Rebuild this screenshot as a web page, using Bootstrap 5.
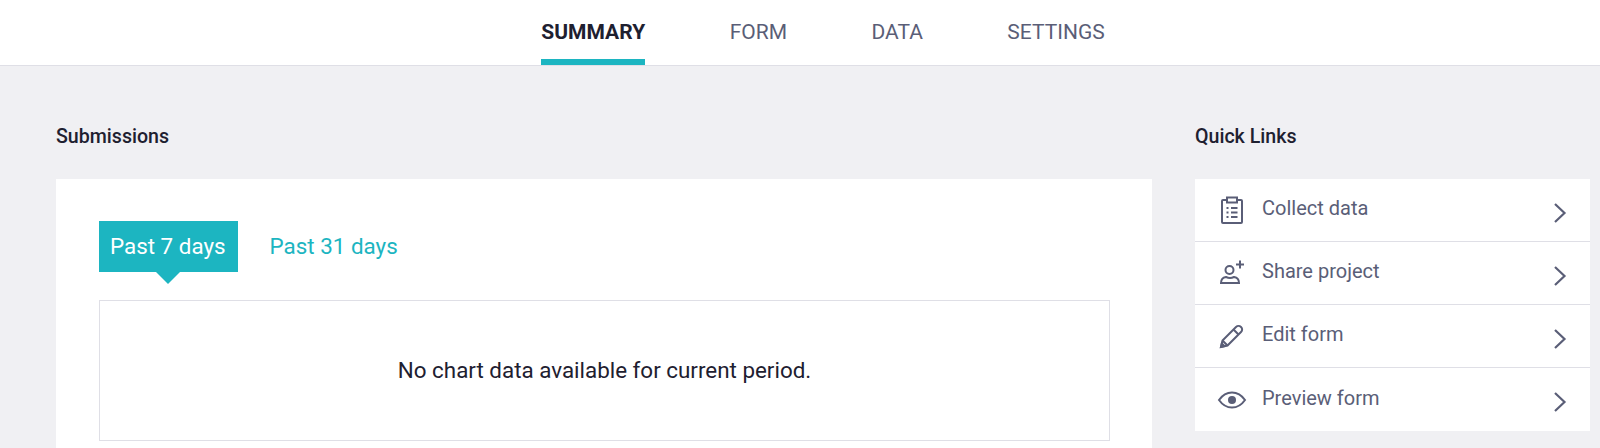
<!DOCTYPE html>
<html>

<head>
  <meta charset="utf-8">
  <meta name="viewport" content="width=device-width">
  <title>Summary</title>
  <link href="https://cdn.jsdelivr.net/npm/bootstrap@5.3.3/dist/css/bootstrap.min.css" rel="stylesheet" type="text/css" />
  <style>
    body { background: #f0f0f3; font-family: Roboto, "Liberation Sans", sans-serif; color: #1e2030; height: 448px; overflow: hidden; }
    .top-tabs { height: 66px; padding-left: 46px; gap: 84.5px; border-bottom: 1px solid #dfdfe6; }
    .top-tab { height: 65px; line-height: 64px; font-size: 21px; color: #5a5e77; text-decoration: none; }
    .top-tab.on { color: #1e2030; font-weight: 700; border-bottom: 6px solid #1cb5c1; }
    .page-body { padding: 61px 10px 0 56px; gap: 43px; }
    .left-side { width: 1096px; }
    .right-side { width: 395px; }
    .side-title { font-size: 19.6px; font-weight: 500; line-height: 20px; margin: 0 0 32px; color: #1e2030; }
    .chart-card { background: #fff; padding: 42px 42px 0 43px; height: 269px; }
    .range-tab { height: 51px; line-height: 50px; font-size: 22.4px; color: #1cb5c1; text-decoration: none; }
    .range-tab.on { background: #1cb5c1; color: #fff; padding: 0 12px 0 11px; position: relative; margin-right: 32px; }
    .range-tab.on::after { content: ""; position: absolute; left: calc(50% - 12px); top: 51px; border: 12px solid transparent; border-top-color: #1cb5c1; border-bottom: 0; }
    .chart-empty { margin-top: 28px; height: 141px; border: 1px solid #dfdfe6; font-size: 22.4px; color: #1e2030; }
    .link-rows { background: #fff; }
    .link-row { height: 63px; padding: 0 22px 4px 21px; color: #5a5e77; font-size: 20px; text-decoration: none; border-bottom: 1px solid #dfdfe6; }
    .link-row:last-child { border-bottom: 0; }
    .link-ico { width: 32px; height: 32px; margin-right: 14px; margin-top: 4px; flex: none; }
    .link-arrow { width: 16px; height: 24px; margin-top: 9px; flex: none; }
  </style>
</head>

<body>
  <header class="bg-white">
    <nav class="top-tabs d-flex justify-content-center">
      <a class="top-tab on" href="#">SUMMARY</a>
      <a class="top-tab" href="#">FORM</a>
      <a class="top-tab" href="#">DATA</a>
      <a class="top-tab" href="#">SETTINGS</a>
    </nav>
  </header>
  <main class="page-body d-flex align-items-start">
    <section class="left-side">
      <h2 class="side-title">Submissions</h2>
      <div class="chart-card">
        <div class="d-flex">
          <a class="range-tab on" href="#">Past 7 days</a>
          <a class="range-tab" href="#">Past 31 days</a>
        </div>
        <div class="chart-empty d-flex align-items-center justify-content-center">No chart data available for current period.</div>
      </div>
    </section>
    <section class="right-side">
      <h2 class="side-title">Quick Links</h2>
      <div class="link-rows">
        <a class="link-row d-flex align-items-center" href="#">
          <svg class="link-ico" viewBox="0 0 32 32" fill="none" stroke="#5a5e77" stroke-width="2">
            <path d="M11 6H7a1 1 0 0 0-1 1v21a1 1 0 0 0 1 1h18a1 1 0 0 0 1-1V7a1 1 0 0 0-1-1h-4"/>
            <rect x="11" y="3.500" width="10" height="5"/>
            <path d="M10.500 14h2M15 14h6.500M10.500 18.500h2M15 18.500h6.500M10.500 23h2M15 23h6.500"/>
          </svg>
          <span class="flex-grow-1">Collect data</span>
          <svg class="link-arrow" viewBox="0 0 16 24" fill="none" stroke="#5a5e77" stroke-width="2.200"><path d="M3 3l9.500 9L3 21"/></svg>
        </a>
        <a class="link-row d-flex align-items-center" href="#">
          <svg class="link-ico" viewBox="0 0 32 32" fill="none" stroke="#5a5e77" stroke-width="2">
            <circle cx="13.500" cy="13" r="4"/>
            <path d="M5 26c0-3.500 2-5.500 5-6 2.500 1.200 5.500 1.200 8 0 3 .5 5 2.500 5 6z"/>
            <path d="M24 3.500v8M20 7.500h8"/>
          </svg>
          <span class="flex-grow-1">Share project</span>
          <svg class="link-arrow" viewBox="0 0 16 24" fill="none" stroke="#5a5e77" stroke-width="2.200"><path d="M3 3l9.500 9L3 21"/></svg>
        </a>
        <a class="link-row d-flex align-items-center" href="#">
          <svg class="link-ico" viewBox="0 0 32 32" fill="none" stroke="#5a5e77" stroke-width="2">
            <path d="M5 27l1.500-6.500L20 7c1.500-1.500 3.500-1.500 5 0s1.500 3.500 0 5L11.500 25.500z"/>
            <path d="M17.500 9.500l5 5M6.500 20.500l5 5"/>
            <path d="M5 27l.8-3.500 2.700 2.700z" fill="#5a5e77"/>
          </svg>
          <span class="flex-grow-1">Edit form</span>
          <svg class="link-arrow" viewBox="0 0 16 24" fill="none" stroke="#5a5e77" stroke-width="2.200"><path d="M3 3l9.500 9L3 21"/></svg>
        </a>
        <a class="link-row d-flex align-items-center" href="#">
          <svg class="link-ico" viewBox="0 0 32 32" fill="none" stroke="#5a5e77" stroke-width="2">
            <path d="M3 16c3.500-5 8-7.500 13-7.500S25.500 11 29 16c-3.500 5-8 7.500-13 7.500S6.500 21 3 16z"/>
            <circle cx="16" cy="16" r="4" fill="#5a5e77" stroke="none"/>
          </svg>
          <span class="flex-grow-1">Preview form</span>
          <svg class="link-arrow" viewBox="0 0 16 24" fill="none" stroke="#5a5e77" stroke-width="2.200"><path d="M3 3l9.500 9L3 21"/></svg>
        </a>
      </div>
    </section>
  </main>
  <script src="https://cdn.jsdelivr.net/npm/bootstrap@5.3.3/dist/js/bootstrap.bundle.min.js"></script>
</body>

</html>
